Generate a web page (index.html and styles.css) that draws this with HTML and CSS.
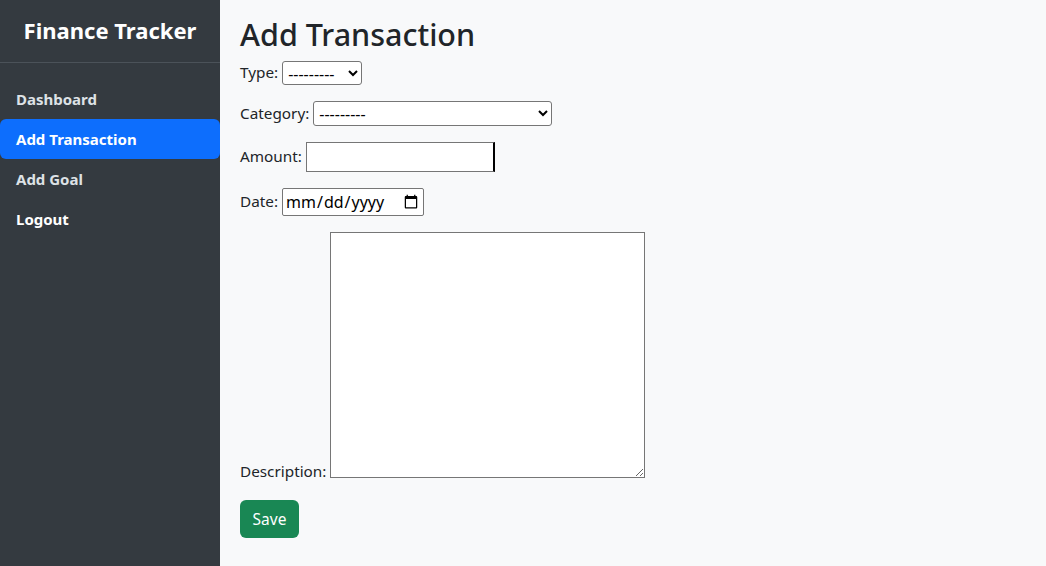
FILE: index.html
```html
<!DOCTYPE html>
<html lang="en">
<head>
<meta charset="utf-8">
<title>Add Transaction</title>
<link rel="stylesheet" href="styles.css">
</head>
<body>
<div class="layout">
  <aside class="sidebar">
    <div class="brand">Finance Tracker</div>
    <nav class="nav">
      <a class="nav-link" href="#">Dashboard</a>
      <a class="nav-link active" href="#">Add Transaction</a>
      <a class="nav-link" href="#">Add Goal</a>
      <a class="nav-link logout" href="#">Logout</a>
    </nav>
  </aside>
  <main class="main">
    <h1 class="page-title">Add Transaction</h1>
    <form class="form">
      <div class="row"><label for="type">Type:</label><select id="type" class="sel sel-type"><option>---------</option></select></div>
      <div class="row"><label for="cat">Category:</label><select id="cat" class="sel sel-cat"><option>---------</option></select></div>
      <div class="row"><label for="amt">Amount:</label><input id="amt" class="amount" type="text"></div>
      <div class="row"><label for="date">Date:</label><input id="date" class="date" type="date"></div>
      <div class="row row-desc"><label for="desc">Description:</label><textarea id="desc" class="desc"></textarea></div>
      <div class="actions"><button type="button" class="btn-save">Save</button></div>
    </form>
  </main>
</div>
</body>
</html>
```
FILE: styles.css
```css
* { box-sizing: border-box; }
html, body { margin: 0; height: 100%; }
body {
  font-family: "Noto Sans", "Open Sans", sans-serif;
  font-size: 16px;
  line-height: 1.5;
  color: #212529;
  background: #f8f9fa;
}
.layout { display: flex; min-height: 100vh; }
.sidebar {
  width: 220px;
  flex: none;
  background: #343a40;
  color: #fff;
}
.brand {
  height: 63px;
  display: flex;
  align-items: center;
  justify-content: center;
  font-size: 22px;
  font-weight: 700;
  border-bottom: 1px solid #4b5259;
  padding-bottom: 2px;
}
.nav {
  display: flex;
  flex-direction: column;
  padding-top: 16px;
}
.nav-link {
  display: block;
  height: 40px;
  line-height: 40px;
  padding: 0 16px;
  color: #dee2e6;
  font-weight: 700;
  font-size: 15px;
  text-decoration: none;
  border-radius: 6px;
}
.nav-link.active { background: #0d6efd; color: #fff; }
.nav-link.logout { color: #fff; }
.main {
  flex: 1;
  padding: 16px 20px 20px;
}
.page-title {
  margin: 0 0 8px;
  font-size: 30.5px;
  font-weight: 500;
  line-height: 1.2;
}
.form { display: flex; flex-direction: column; gap: 16px; font-size: 15.3px; }
.row { display: flex; align-items: center; gap: 4px; }
.row-desc { align-items: flex-end; }
.row-desc label { line-height: 1.2; margin-bottom: -3px; }
.sel {
  font-family: inherit;
  font-size: 16px;
  color: #000;
  background: #fff;
  border: 1px solid #767676;
  border-radius: 3px;
  padding: 0 1px;
}
.sel-type { width: 80px; height: 24px; }
.sel-cat { width: 239px; height: 25px; }
.amount {
  width: 189px;
  height: 30px;
  font: inherit;
  background: #fff;
  border: 1px solid #767676;
  border-right: 2px solid #000;
  border-radius: 0;
}
.date {
  width: 142px;
  height: 28px;
  font-family: inherit;
  font-size: 16px;
  background: #fff;
  border: 1px solid #767676;
  border-radius: 2px;
  padding: 0 2px;
}
.desc {
  width: 315px;
  height: 246px;
  font: inherit;
  background: #fff;
  border: 1px solid #767676;
  border-radius: 0;
  margin: 0;
}
.actions { margin-top: 6px; }
.btn-save {
  width: 59px;
  height: 38px;
  background: #198754;
  color: #fff;
  border: 0;
  border-radius: 6px;
  font-family: inherit;
  font-size: 15.5px;
  cursor: pointer;
}
```
